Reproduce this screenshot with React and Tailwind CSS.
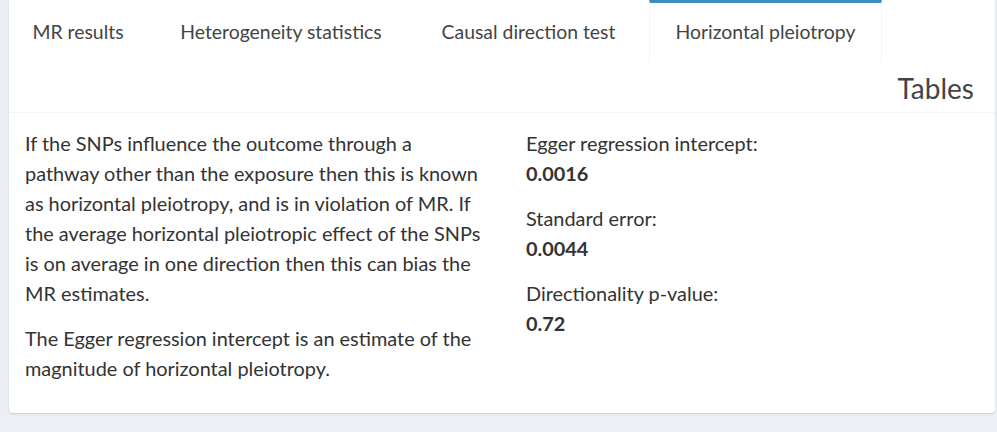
export default function App() {
  const tabs = [
    { label: "MR results", w: "w-[138px]" },
    { label: "Heterogeneity statistics", w: "w-[254px]" },
    { label: "Causal direction test", w: "w-[227px]" },
    { label: "Horizontal pleiotropy", w: "w-[233px]" },
  ];
  const active = 3;

  return (
    <div
      className="min-h-[432px] w-[997px] bg-[#ecf0f5] pl-[9px] pr-[2px] pb-[19px] text-[#333]"
      style={{ fontFamily: "Lato, 'Liberation Sans', sans-serif" }}
    >
      <div className="bg-white rounded-b-[4px] shadow-[0_1px_2px_rgba(0,0,0,0.15)]">
        {/* tab row */}
        <div className="flex gap-[7px] h-[62px]">
          {tabs.map((t, i) => (
            <div
              key={t.label}
              className={
                i === active
                  ? `${t.w} text-center pt-[14px] border-t-[3px] border-t-[#3c8dbc] border-x border-x-[#f4f4f4] text-[19.4px] leading-[30px] text-[#444]`
                  : `${t.w} text-center pt-[17px] text-[19.4px] leading-[30px] text-[#444]`
              }
            >
              {t.label}
            </div>
          ))}
        </div>
        {/* header */}
        <div className="flex justify-end h-[51px] border-b border-[#f4f4f4] pr-[21px]">
          <div className="text-[28px] leading-[56px] text-[#444] -mt-[2px]">Tables</div>
        </div>
        {/* body */}
        <div className="flex pt-[15px] pb-[15px]">
          <div className="w-[501px] pl-[16px] text-[19.9px] leading-[30px]">
            <p className="mb-[15px] whitespace-nowrap">
              If the SNPs influence the outcome through a<br />
              pathway other than the exposure then this is known<br />
              as horizontal pleiotropy, and is in violation of MR. If<br />
              the average horizontal pleiotropic effect of the SNPs<br />
              is on average in one direction then this can bias the<br />
              MR estimates.
            </p>
            <p className="mb-[15px] whitespace-nowrap">
              The Egger regression intercept is an estimate of the<br />
              magnitude of horizontal pleiotropy.
            </p>
          </div>
          <div className="pl-[16px] text-[19.9px] leading-[30px]">
            <div className="mb-[15px]">
              <div>Egger regression intercept:</div>
              <div className="font-bold">0.0016</div>
            </div>
            <div className="mb-[15px]">
              <div>Standard error:</div>
              <div className="font-bold">0.0044</div>
            </div>
            <div className="mb-[15px]">
              <div>Directionality p-value:</div>
              <div className="font-bold">0.72</div>
            </div>
          </div>
        </div>
      </div>
    </div>
  );
}
